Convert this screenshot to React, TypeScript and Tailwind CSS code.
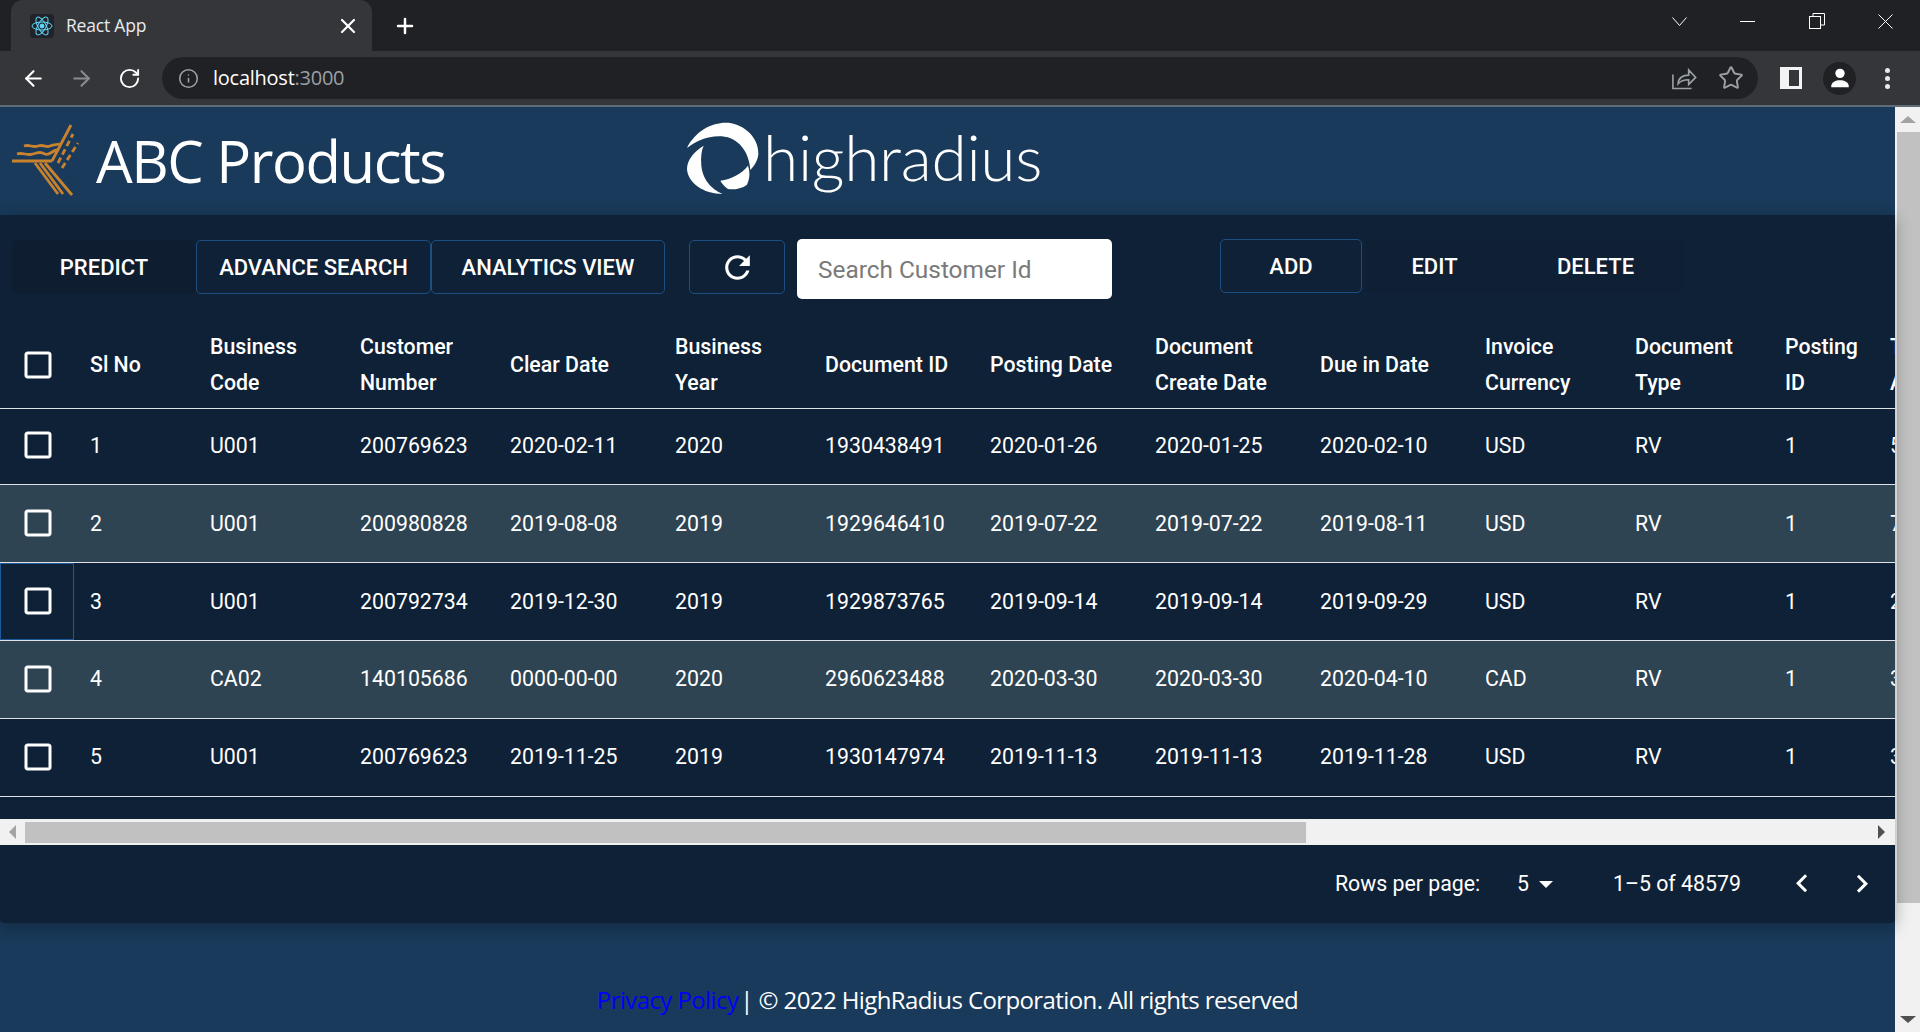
import React from 'react'
import { ArrowLeft, ArrowRight, RotateCw, Info, Star, X, Plus } from 'lucide-react'

const columns = 'grid grid-cols-[74px_120px_150px_150px_165px_150px_165px_165px_165px_165px_150px_150px_105px_150px] items-center'

const headers: string[][] = [
  ['Sl No'],
  ['Business', 'Code'],
  ['Customer', 'Number'],
  ['Clear Date'],
  ['Business', 'Year'],
  ['Document ID'],
  ['Posting Date'],
  ['Document', 'Create Date'],
  ['Due in Date'],
  ['Invoice', 'Currency'],
  ['Document', 'Type'],
  ['Posting', 'ID'],
  ['Total Open', 'Amount'],
]

const rows = [
  ['1', 'U001', '200769623', '2020-02-11', '2020', '1930438491', '2020-01-26', '2020-01-25', '2020-02-10', 'USD', 'RV', '1', '5'],
  ['2', 'U001', '200980828', '2019-08-08', '2019', '1929646410', '2019-07-22', '2019-07-22', '2019-08-11', 'USD', 'RV', '1', '7'],
  ['3', 'U001', '200792734', '2019-12-30', '2019', '1929873765', '2019-09-14', '2019-09-14', '2019-09-29', 'USD', 'RV', '1', '2'],
  ['4', 'CA02', '140105686', '0000-00-00', '2020', '2960623488', '2020-03-30', '2020-03-30', '2020-04-10', 'CAD', 'RV', '1', '3'],
  ['5', 'U001', '200769623', '2019-11-25', '2019', '1930147974', '2019-11-13', '2019-11-13', '2019-11-28', 'USD', 'RV', '1', '3'],
]

function CheckBox() {
  return (
    <svg viewBox="0 0 24 24" className="w-9 h-9 fill-white ml-5">
      <path d="M19 5v14H5V5h14m0-2H5c-1.1 0-2 .9-2 2v14c0 1.1.9 2 2 2h14c1.1 0 2-.9 2-2V5c0-1.1-.9-2-2-2z" />
    </svg>
  )
}

function ReactIcon() {
  return (
    <div className="w-6 h-6 bg-[#20232a] rounded-sm flex items-center justify-center">
      <svg viewBox="-12 -12 24 24" className="w-6 h-6 fill-none stroke-[#61dafb]">
        <circle r="2" className="fill-[#61dafb]" />
        <ellipse rx="10" ry="4" />
        <ellipse rx="10" ry="4" transform="rotate(60)" />
        <ellipse rx="10" ry="4" transform="rotate(120)" />
      </svg>
    </div>
  )
}

function BrowserChrome() {
  return (
    <div className="shrink-0 font-['Open_Sans',sans-serif]">
      <div className="h-[51px] bg-[#202124] flex">
        <div className="ml-[11px] w-[361px] h-[51px] bg-[#35363a] rounded-t-xl flex items-center pl-[19px] pr-[12px]">
          <ReactIcon />
          <span className="ml-3 text-[17.500px] text-[#e8eaed] tracking-[-0.2px] flex-1">React App</span>
          <X className="w-6 h-6 text-white" strokeWidth={2.2} />
        </div>
        <div className="ml-[21px] flex items-center">
          <Plus className="w-6 h-6 text-white" strokeWidth={2.5} />
        </div>
        <div className="flex-1" />
        <div className="flex items-center text-white pb-[9px] pr-[27px]">
          <svg viewBox="0 0 15 15" className="w-[15px] h-[15px] fill-none stroke-white mr-[53px]">
            <path d="M0.500 3.500L7.500 11.500L14.500 3.500" />
          </svg>
          <svg viewBox="0 0 15 15" className="w-[15px] h-[15px] fill-none stroke-white mr-[54px]">
            <path d="M0 7.500H15" />
          </svg>
          <svg viewBox="0 0 16 16" className="w-[16px] h-[16px] fill-none stroke-white mr-[53px]">
            <rect x="0.500" y="3.500" width="11" height="12" />
            <path d="M4 3V0.500h11.500V12H12" />
          </svg>
          <svg viewBox="0 0 15 15" className="w-[15px] h-[15px] fill-none stroke-white">
            <path d="M0.500 0.500L14.500 14.500M14.500 0.500L0.500 14.500" />
          </svg>
        </div>
      </div>
      <div className="h-[54px] bg-[#35363a] flex items-center">
        <ArrowLeft className="w-[25px] h-[25px] ml-[21px] text-white" strokeWidth={2} />
        <ArrowRight className="w-[25px] h-[25px] ml-[23px] text-[#8a8b8d]" strokeWidth={2} />
        <RotateCw className="w-[23px] h-[23px] ml-[24px] text-white" strokeWidth={2} />
        <div className="ml-[21px] w-[1596px] h-[42px] bg-[#202124] rounded-full flex items-center pl-4 pr-[14px]">
          <Info className="w-[21px] h-[21px] text-[#9aa0a6]" strokeWidth={1.8} />
          <span className="ml-[14px] text-[20px] text-white tracking-[-0.25px] flex-1">
            localhost<span className="text-[#9aa0a6]">:3000</span>
          </span>
          <svg viewBox="0 0 24 24" className="w-7 h-7 fill-none stroke-[#9aa0a6] stroke-[1.4]">
            <path d="M2.500 9v12h16M7 17c0-5 4-7.500 9-7.500V5l6 6.500-6 6V13.500c-4 0-7 1-9 3.500z" />
          </svg>
          <Star className="w-[26px] h-[26px] ml-[20px] text-[#9aa0a6]" strokeWidth={1.8} />
        </div>
        <div className="ml-[22px] w-[22px] h-[22px] bg-[#f1f3f4] flex items-center justify-end pr-[3px] py-[3px]">
          <div className="w-[10px] h-[16px] bg-[#35363a]" />
        </div>
        <div className="ml-[21px] w-[33px] h-[33px] rounded-full bg-[#202124] flex items-center justify-center">
          <svg viewBox="0 0 24 24" className="w-7 h-7 fill-white">
            <circle cx="12" cy="8" r="4" />
            <path d="M4.500 19c0-3.500 4-5 7.500-5s7.500 1.500 7.500 5v1h-15z" />
          </svg>
        </div>
        <div className="ml-[29px] flex flex-col gap-[3px]">
          <div className="w-[5px] h-[5px] rounded-full bg-[#e8eaed]" />
          <div className="w-[5px] h-[5px] rounded-full bg-[#e8eaed]" />
          <div className="w-[5px] h-[5px] rounded-full bg-[#e8eaed]" />
        </div>
      </div>
      <div className="h-[2px] bg-[#5f6b76]" />
    </div>
  )
}

function AppHeader() {
  return (
    <div className="h-[108px] bg-[#193a5a] flex items-center shrink-0">
      <svg viewBox="0 0 100 90" className="w-[100px] h-[90px] shrink-0 fill-none stroke-[#c9822e] stroke-[2.800]">
        <path d="M12 45H52" />
        <path d="M17 38c6-2 10 2 16 0s8-2 12 0 8-4 12-4" />
        <path d="M24 30c6-2 8 2 14 0s8 2 12 0 6-1 10-2" />
        <path d="M52 45L71 9" />
        <path d="M58 47L73 18" strokeDasharray="6 3.500" />
        <path d="M62 52L78 27" strokeDasharray="6 3.500" />
        <path d="M35 47L58 78" />
        <path d="M40 47L63 78" />
        <path d="M45 47L72 79" />
      </svg>
      <span className="-ml-[4px] text-[58px] leading-none text-white font-['Open_Sans',sans-serif] tracking-[-1.4px] w-[587px] shrink-0">ABC Products</span>
      <svg viewBox="70 25 240 240" className="w-[80px] h-[80px] mb-1 shrink-0 fill-white">
        <path d="M82 112C110 55 170 30 215 38C265 48 298 90 296 130C294 150 285 165 272 178C270 135 245 85 195 78C150 72 110 90 82 112Z" />
        <path d="M132 105C100 125 82 150 82 175C84 215 130 250 190 250C165 240 130 215 125 165C123 140 125 120 132 105Z" />
        <path d="M182 210C215 205 245 190 265 165C272 185 270 205 262 222C245 235 220 238 205 235C195 228 188 220 182 210Z" />
      </svg>
      <span className="pb-2 text-[64px] leading-none text-white font-['Lato',sans-serif] font-light tracking-[-0.3px]">highradius</span>
    </div>
  )
}

function Toolbar() {
  const blue = 'border border-[#1d4f83] rounded-[5px]'
  const predict = 'border border-[#0e1e31] bg-[#0e1d30] rounded-[5px]'
  const plain = 'border border-[#0e1f33] bg-[#0f1f34] rounded-[5px]'
  const label = 'h-[54px] flex items-center justify-center text-[22px] font-medium text-white uppercase'
  return (
    <div className="h-[107px] flex items-start pt-6 pl-3 shrink-0">
      <div className={`${label} ${predict} w-[184px] mt-px`}>Predict</div>
      <div className={`${label} ${blue} w-[235px] mt-px`}>Advance Search</div>
      <div className={`${label} ${blue} w-[234px] mt-px`}>Analytics View</div>
      <div className={`${label} ${blue} w-[96px] mt-px ml-6`}>
        <svg viewBox="0 0 24 24" className="w-[37px] h-[37px] fill-white">
          <path d="M17.650 6.350C16.200 4.900 14.210 4 12 4c-4.420 0-7.990 3.580-7.990 8s3.570 8 7.990 8c3.730 0 6.840-2.550 7.730-6h-2.080c-.82 2.330-3.040 4-5.650 4-3.310 0-6-2.690-6-6s2.690-6 6-6c1.660 0 3.140.69 4.220 1.780L13 11h7V4l-2.350 2.350z" />
        </svg>
      </div>
      <div className="ml-3 w-[315px] h-[60px] bg-white rounded-[5px] flex items-center pl-[21px] pt-0.5 text-[24.400px] text-[#7a7a7a]">
        Search Customer Id
      </div>
      <div className={`${label} ${blue} w-[142px] ml-[108px]`}>Add</div>
      <div className={`${label} ${plain} w-[142px] ml-1 pr-[5px]`}>Edit</div>
      <div className={`${label} ${plain} w-[173px] ml-0.5 pr-[2px]`}>Delete</div>
    </div>
  )
}

function DataTable() {
  const heights = ['h-[76px] pb-[2px]', 'h-[78px]', 'h-[78px]', 'h-[78px]', 'h-[78px]']
  const textOffsets = ['', '', '', 'pb-[2px]', 'pb-[2px]']
  return (
    <div className="overflow-hidden shrink-0">
      <div className={`${columns} h-[87px] border-b border-[#dfe3e8] w-[2039px]`}>
        <CheckBox />
        {headers.map((lines) => (
          <div key={lines[0]} className="pl-4 text-[21.300px] leading-[36px] font-medium text-white whitespace-nowrap">
            {lines.map((line) => (
              <div key={line}>{line}</div>
            ))}
          </div>
        ))}
      </div>
      {rows.map((row, i) => (
        <div key={row[0]} className={`${columns} ${heights[i]} border-b border-[#dfe3e8] w-[2039px] ${i % 2 === 1 ? 'bg-[#2f4453]' : ''}`}>
          <div className={`h-full flex items-center pb-[2px] ${i === 2 ? 'outline outline-1 -outline-offset-1 outline-[#1d5a9c]' : ''}`}>
            <CheckBox />
          </div>
          {row.map((cell, j) => (
            <div key={j} className={`pl-4 text-[21.300px] text-white whitespace-nowrap ${textOffsets[i]}`}>{cell}</div>
          ))}
        </div>
      ))}
    </div>
  )
}

function HorizontalScrollbar() {
  return (
    <div className="h-[26px] mt-[22px] bg-[#f1f1f1] flex items-center shrink-0">
      <div className="w-[25px] flex justify-center">
        <div className="w-0 h-0 border-y-[7px] border-y-transparent border-r-[7px] border-r-[#a3a3a3]" />
      </div>
      <div className="w-[1281px] h-[21px] bg-[#c1c1c1]" />
      <div className="flex-1" />
      <div className="w-0 h-0 border-y-[7px] border-y-transparent border-l-[7px] border-l-[#505050] mr-[10px]" />
    </div>
  )
}

function Pagination() {
  return (
    <div className="h-[78px] flex items-center text-[21.300px] text-white shrink-0 pl-[1335px]">
      <span className="w-[182px]">Rows per page:</span>
      <span className="w-[22px]">5</span>
      <div className="w-0 h-0 border-x-[7px] border-x-transparent border-t-[7px] border-t-white" />
      <span className="ml-[60px] w-[150px]">1–5 of 48579</span>
      <svg viewBox="0 0 24 24" className="w-9 h-9 fill-white ml-[21px]">
        <path d="M15.410 16.090l-4.580-4.590 4.580-4.590L14 5.500l-6 6 6 6z" />
      </svg>
      <svg viewBox="0 0 24 24" className="w-9 h-9 fill-white ml-[24px]">
        <path d="M8.590 16.340l4.580-4.590-4.580-4.590L10 5.750l6 6-6 6z" />
      </svg>
    </div>
  )
}

function VerticalScrollbar() {
  return (
    <div className="w-[25px] bg-[#f1f1f1] flex flex-col items-center shrink-0">
      <div className="h-[25px] flex items-center justify-center">
        <div className="w-0 h-0 border-x-[8px] border-x-transparent border-b-[7px] border-b-[#a3a3a3]" />
      </div>
      <div className="w-[23px] ml-0.5 h-[771px] bg-[#c1c1c1]" />
      <div className="flex-1" />
      <div className="h-[25px] flex items-center justify-center">
        <div className="w-0 h-0 border-x-[8px] border-x-transparent border-t-[7px] border-t-[#505050]" />
      </div>
    </div>
  )
}

export default function App() {
  return (
    <div className="w-[1920px] h-[1032px] flex flex-col overflow-hidden font-['Roboto',sans-serif]">
      <BrowserChrome />
      <div className="flex-1 flex min-h-0">
        <div className="w-[1895px] flex flex-col bg-[#193a5a]">
          <AppHeader />
          <div className="bg-[#0f2136] flex flex-col relative shrink-0 rounded-b-[4px] shadow-[0_4px_16px_rgba(0,0,0,0.3)]">
            <Toolbar />
            <DataTable />
            <HorizontalScrollbar />
            <Pagination />
          </div>
          <div className="flex-1 flex items-end justify-center pb-[14px] text-[24px] text-white font-['Open_Sans',sans-serif] tracking-[-0.6px]">
            <span className="text-[#0000ff]">Privacy Policy</span>
            <span className="ml-[2px]">| © 2022 HighRadius Corporation. All rights reserved</span>
          </div>
        </div>
        <VerticalScrollbar />
      </div>
    </div>
  )
}
